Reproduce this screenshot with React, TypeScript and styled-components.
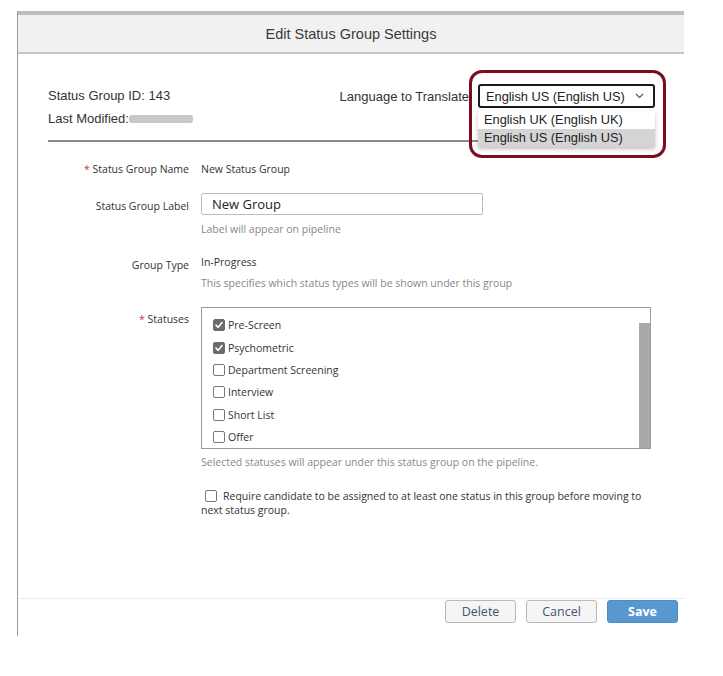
import styled, { createGlobalStyle } from "styled-components"

const Global = createGlobalStyle`
body{
    margin: 0;
    background: #fff;
    font-family: "Open Sans", "Liberation Sans", sans-serif;
    color: #333;
}
`

const statuses = [
    { name: "Pre-Screen", on: true },
    { name: "Psychometric", on: true },
    { name: "Department Screening", on: false },
    { name: "Interview", on: false },
    { name: "Short List", on: false },
    { name: "Offer", on: false },
]

const Box = ({ on }: { on: boolean }) => (
    <Check $on={on}>
        {on && (
            <svg width="10" height="10" viewBox="0 0 10 10">
                <path d="M2 5.2 L4.2 7.3 L8 2.6" stroke="#fff" strokeWidth="1.6" fill="none" strokeLinecap="round" strokeLinejoin="round" />
            </svg>
        )}
    </Check>
)

const App = () => {
    return (
        <Page>
            <Global />
            <Dialog>
                <Head>Edit Status Group Settings</Head>
                <Body>
                    <Top>
                        <Meta>
                            <p>Status Group ID: 143</p>
                            <p>Last Modified:<Blur /></p>
                        </Meta>
                        <Lang>
                            <span>Language to Translate</span>
                            <Picker>
                                <Select>
                                    English US (English US)
                                    <svg width="9" height="6" viewBox="0 0 9 6">
                                        <path d="M1 1 L4.5 4.5 L8 1" stroke="#555" strokeWidth="1.1" fill="none" />
                                    </svg>
                                </Select>
                                <Options>
                                    <Option>English UK (English UK)</Option>
                                    <Option $active>English US (English US)</Option>
                                </Options>
                                <Highlight />
                            </Picker>
                        </Lang>
                    </Top>
                    <Rule />
                    <Form>
                        <Label $req $top={0}>Status Group Name</Label>
                        <Value $top={0}>New Status Group</Value>

                        <Label $top={23}>Status Group Label</Label>
                        <Field $top={17}>
                            <Input>New Group</Input>
                            <Help>Label will appear on pipeline</Help>
                        </Field>

                        <Label $top={22}>Group Type</Label>
                        <Field $top={19}>
                            <Value>In-Progress</Value>
                            <Help $gap={7}>This specifies which status types will be shown under this group</Help>
                        </Field>

                        <Label $req $top={22}>Statuses</Label>
                        <Field $top={17}>
                            <List>
                                <Items>
                                    {statuses.map((s) => (
                                        <Item key={s.name}>
                                            <Box on={s.on} />
                                            <span>{s.name}</span>
                                        </Item>
                                    ))}
                                </Items>
                                <Scroll />
                            </List>
                            <Help $gap={6}>Selected statuses will appear under this status group on the pipeline.</Help>
                            <Require>
                                <Box on={false} />
                                <span>Require candidate to be assigned to at least one status in this group before moving to next status group.</span>
                            </Require>
                        </Field>
                    </Form>
                </Body>
                <Foot>
                    <Btn>Delete</Btn>
                    <Btn>Cancel</Btn>
                    <Btn $primary>Save</Btn>
                </Foot>
            </Dialog>
        </Page>
    )
}
export default App

const Page = styled.div`
padding: 11px 0 0 17px;
`
const Dialog = styled.div`
width: 666px;
height: 625px;
border-left: 1px solid #9a9a9a;
display: flex;
flex-direction: column;
`
const Head = styled.div`
height: 37px;
background: #f1f1f1;
border-top: 4px solid #bdbdbd;
border-bottom: 2px solid #c6c6c6;
display: flex;
align-items: center;
justify-content: center;
font-family: "Liberation Sans", sans-serif;
font-size: 14.5px;
color: #3a3a3a;
`
const Body = styled.div`
flex: 1;
padding: 30px 0 0 30px;
`
const Top = styled.div`
display: flex;
justify-content: space-between;
width: 607px;
height: 56px;
`
const Meta = styled.div`
padding-top: 4px;
font-family: "Liberation Sans", sans-serif;
font-size: 13px;
color: #333;
p{
    margin: 0 0 8px;
    line-height: 15px;
    display: flex;
    align-items: center;
}
`
const Blur = styled.span`
display: inline-block;
width: 64px;
height: 8px;
border-radius: 3px;
background: #c8c8c8;
`
const Lang = styled.div`
display: flex;
align-items: flex-start;
font-family: "Liberation Sans", sans-serif;
font-size: 13px;
span{
    margin-top: 5px;
    margin-right: 9px;
    color: #333;
}
`
const Picker = styled.div`
position: relative;
`
const Select = styled.div`
width: 177px;
height: 24px;
box-sizing: border-box;
border: 2px solid #1a1a1a;
border-radius: 3px;
display: flex;
align-items: center;
justify-content: space-between;
padding: 0 9px 0 6px;
font-size: 12.8px;
color: #222;
background: #fff;
`
const Options = styled.div`
position: absolute;
top: 27px;
left: 0;
width: 177px;
background: #fff;
box-shadow: 0 2px 4px rgba(0,0,0,0.25);
z-index: 2;
`
const Option = styled.div<{ $active?: boolean }>`
height: 18px;
line-height: 18px;
padding-left: 6px;
font-size: 12.8px;
color: #222;
background: ${(p) => (p.$active ? "#d4d4d4" : "#fff")};
`
const Highlight = styled.div`
position: absolute;
left: -9px;
top: -14px;
width: 197px;
height: 88px;
box-sizing: border-box;
border: 3px solid #7b0d1e;
border-radius: 13px;
z-index: 3;
pointer-events: none;
`
const Rule = styled.div`
width: 607px;
height: 2px;
background: #8a8a8a;
`
const Form = styled.div`
display: grid;
grid-template-columns: 141px 1fr;
column-gap: 12px;
align-items: start;
font-size: 10.5px;
margin-top: 20px;
`
const Label = styled.div<{ $req?: boolean; $top: number }>`
text-align: right;
color: #333;
margin-top: ${(p) => p.$top}px;
&::before{
    content: ${(p) => (p.$req ? "'* '" : "''")};
    color: #d0323a;
}
`
const Value = styled.div<{ $top?: number }>`
color: #333;
margin-top: ${(p) => p.$top || 0}px;
`
const Field = styled.div<{ $top: number }>`
margin-top: ${(p) => p.$top}px;
`
const Input = styled.div`
width: 282px;
height: 22px;
box-sizing: border-box;
border: 1px solid #bdbdbd;
border-radius: 2px;
padding-left: 10px;
display: flex;
align-items: center;
font-size: 13px;
color: #222;
`
const Help = styled.div<{ $gap?: number }>`
color: #888;
margin-top: ${(p) => p.$gap ?? 7}px;
`
const List = styled.div`
width: 450px;
height: 142px;
box-sizing: border-box;
border: 1px solid #9a9a9a;
display: flex;
justify-content: space-between;
overflow: hidden;
`
const Items = styled.div`
padding: 10px 0 0 11px;
display: flex;
flex-direction: column;
gap: 8px;
`
const Item = styled.div`
display: flex;
align-items: center;
gap: 3px;
height: 14.4px;
color: #333;
font-size: 10.5px;
`
const Check = styled.span<{ $on: boolean }>`
width: 12px;
height: 12px;
box-sizing: border-box;
border-radius: 2px;
border: 1px solid ${(p) => (p.$on ? "#6b6b6b" : "#777")};
background: ${(p) => (p.$on ? "#6b6b6b" : "#fff")};
display: inline-flex;
align-items: center;
justify-content: center;
flex-shrink: 0;
`
const Scroll = styled.div`
width: 11px;
margin-top: 15px;
background: #a9a9a9;
`
const Require = styled.div`
margin-top: 20px;
width: 450px;
line-height: 14px;
color: #333;
text-indent: 4px;
${Check}{
    vertical-align: -2px;
    margin-right: 6px;
}
`
const Foot = styled.div`
height: 36px;
border-top: 1px solid #ececec;
display: flex;
justify-content: flex-end;
align-items: flex-start;
gap: 10px;
padding: 1px 6px 0 0;
`
const Btn = styled.button<{ $primary?: boolean }>`
width: 71px;
height: 23px;
border-radius: 3px;
font-family: "Open Sans", sans-serif;
font-size: 12.5px;
font-weight: ${(p) => (p.$primary ? 700 : 400)};
color: ${(p) => (p.$primary ? "#fff" : "#46546e")};
background: ${(p) => (p.$primary ? "#5897cf" : "#f5f5f5")};
border: 1px solid ${(p) => (p.$primary ? "#4d8cc6" : "#b9b9b9")};
`
